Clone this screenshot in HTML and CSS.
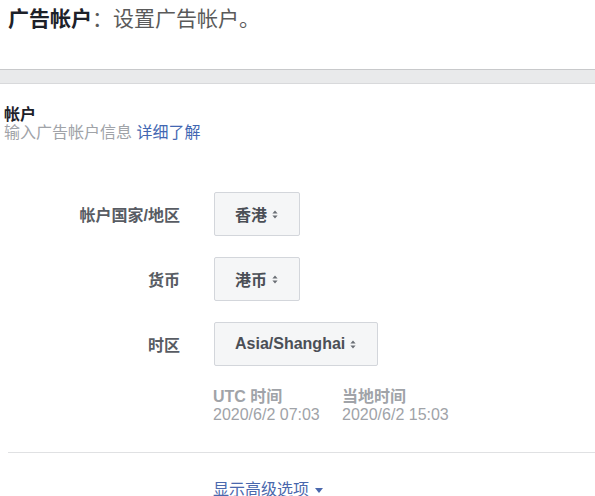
FILE: index.html
```html
<!DOCTYPE html>
<html lang="zh-CN">
<head>
<meta charset="utf-8">
<title>广告帐户</title>
<link rel="stylesheet" href="styles.css">
</head>
<body>
<header class="page-title"><strong>广告帐户</strong>：设置广告帐户。</header>
<div class="band"></div>
<section class="section">
  <div class="sec-title">帐户</div>
  <div class="sec-desc">输入广告帐户信息 <a class="link" href="#">详细了解</a></div>
  <div class="form">
    <div class="label">帐户国家/地区</div>
    <div class="ctl"><span class="select">香港<svg class="updown" viewBox="0 0 6 9" width="6" height="9"><path d="M3 0.5 L5.6 3.6 L0.4 3.6 Z M3 8.5 L5.6 5.4 L0.4 5.4 Z"/></svg></span></div>
    <div class="label">货币</div>
    <div class="ctl"><span class="select">港币<svg class="updown" viewBox="0 0 6 9" width="6" height="9"><path d="M3 0.5 L5.6 3.6 L0.4 3.6 Z M3 8.5 L5.6 5.4 L0.4 5.4 Z"/></svg></span></div>
    <div class="label">时区</div>
    <div class="ctl"><span class="select">Asia/Shanghai<svg class="updown" viewBox="0 0 6 9" width="6" height="9"><path d="M3 0.5 L5.6 3.6 L0.4 3.6 Z M3 8.5 L5.6 5.4 L0.4 5.4 Z"/></svg></span></div>
  </div>
  <div class="times">
    <div class="time-col">
      <div class="time-label">UTC 时间</div>
      <div class="time-value">2020/6/2 07:03</div>
    </div>
    <div class="time-col">
      <div class="time-label">当地时间</div>
      <div class="time-value">2020/6/2 15:03</div>
    </div>
  </div>
</section>
<div class="divider"></div>
<div class="adv"><a class="adv-link" href="#">显示高级选项<svg class="caret" viewBox="0 0 8 5" width="8" height="5"><path d="M0 0 L8 0 L4 5 Z"/></svg></a></div>
</body>
</html>
```

FILE: styles.css
```css
html, body {
  margin: 0;
  padding: 0;
  background: #ffffff;
}
body {
  width: 595px;
  overflow: hidden;
  font-family: "Liberation Sans", "Noto Sans CJK SC", sans-serif;
  font-size: 16px;
  color: #4b4f56;
}
.page-title {
  padding: 7px 8px 0;
  height: 24px;
  line-height: 24px;
  font-size: 21px;
  color: #5a5a5a;
  margin-bottom: 38px;
  white-space: nowrap;
}
.page-title strong {
  color: #1d2129;
  font-weight: bold;
}
.band {
  height: 13px;
  background: #e9eaeb;
  border-top: 1px solid #c8c9cb;
  border-bottom: 1px solid #d8d9db;
}
.section {
  padding: 22px 0 0 4px;
}
.sec-title {
  line-height: 18px;
  font-weight: bold;
  color: #1d2129;
}
.sec-desc {
  line-height: 18px;
  color: #a0a3a8;
}
.link {
  color: #4267b2;
  text-decoration: none;
}
.form {
  display: grid;
  grid-template-columns: 176px auto;
  column-gap: 34px;
  row-gap: 21px;
  align-items: center;
  margin-top: 50px;
}
.label {
  text-align: right;
  font-weight: bold;
  color: #585c63;
  white-space: nowrap;
}
.ctl {
  display: flex;
}
.select {
  display: inline-flex;
  align-items: center;
  gap: 5px;
  height: 42px;
  padding: 0 21px 0 20px;
  background: #f5f6f7;
  border: 1px solid #d3d6db;
  border-radius: 2px;
  font-weight: bold;
  color: #4b4f56;
  white-space: nowrap;
}
.updown {
  fill: #6a6e75;
  flex: none;
}
.times {
  display: flex;
  padding-left: 209px;
  margin-top: 22px;
}
.time-col {
  width: 129px;
  color: #a0a3a8;
  line-height: 18px;
}
.time-label {
  font-weight: bold;
}
.divider {
  margin: 28px 0 0 8px;
  height: 1px;
  background: #e0e1e3;
}
.adv {
  padding-left: 213px;
  margin-top: 28px;
  line-height: 18px;
}
.adv-link {
  display: inline-flex;
  align-items: center;
  gap: 6px;
  color: #4a68ad;
  text-decoration: none;
}
.caret {
  fill: #4a68ad;
}
```
